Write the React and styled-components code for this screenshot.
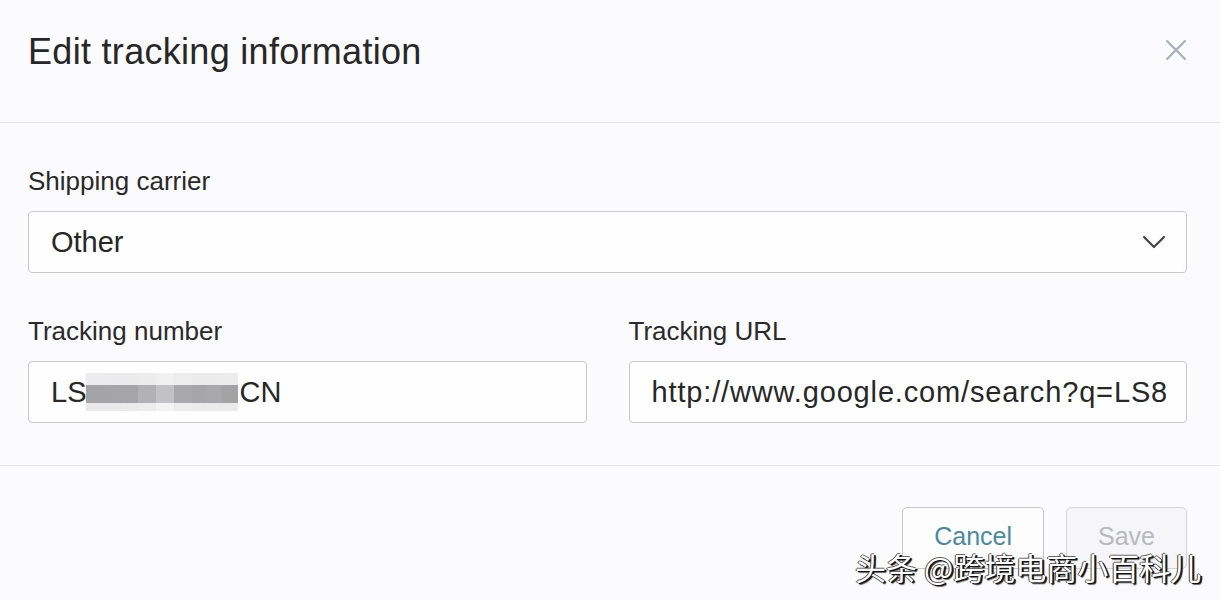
import React from "react";
import styled, { createGlobalStyle } from "styled-components";

const Global = createGlobalStyle`
  html, body { margin: 0; padding: 0; background: #fbfafc; }
  body { font-family: "Liberation Sans", Arial, sans-serif; color: #262626; }
  * { box-sizing: border-box; }
`;

const Page = styled.div`
  position: relative;
  width: 1220px;
  height: 600px;
  overflow: hidden;
  background: #fbfafc;
`;

const Header = styled.header`
  height: 123px;
  border-bottom: 1px solid #e6e5e8;
  display: flex;
  justify-content: space-between;
  align-items: flex-start;
  padding: 31px 32px 0 28px;
`;

const Title = styled.h1`
  margin: 0;
  font-size: 36px;
  font-weight: 400;
  color: #272727;
  letter-spacing: 0.3px;
`;

const CloseBtn = styled.button`
  border: 0;
  background: none;
  padding: 0;
  margin-top: 7px;
  width: 24px;
  height: 24px;
  display: flex;
  align-items: center;
  justify-content: center;
`;

const Body = styled.section`
  padding: 43px 33px 42px 28px;
  border-bottom: 1px solid #e6e5e8;
  display: flex;
  flex-direction: column;
  gap: 43px;
`;

const Field = styled.div`
  display: flex;
  flex-direction: column;
  gap: 15px;
  min-width: 0;
`;

const Row = styled.div`
  display: grid;
  grid-template-columns: 1fr 1fr;
  gap: 42px;
`;

const Label = styled.label`
  font-size: 26px;
  color: #2a2a2a;
  line-height: 30px;
`;

const Box = styled.div`
  height: 62px;
  border: 1px solid #c9c9cc;
  border-radius: 4px;
  background: #fefefe;
  display: flex;
  align-items: center;
  justify-content: space-between;
  padding: 0 20px 0 22px;
  font-size: 29px;
  color: #272727;
  overflow: hidden;
  white-space: nowrap;
`;

const Value = styled.span`
  display: flex;
  align-items: center;
  overflow: hidden;
  min-width: 0;
  letter-spacing: ${(p) => (p.$wide ? "0.85px" : "0")};
`;

const Redacted = styled.span`
  display: inline-grid;
  grid-template-columns: 20px 16px 16px 18px 18px 18px 14px 16px 16px;
  grid-template-rows: 12px 18px 8px;
  width: 152px;
  height: 38px;
  margin: 0 1px 0 0;
  align-self: center;
`;

const Cell = styled.span`
  background: ${(p) => p.$c};
`;

const Footer = styled.footer`
  display: flex;
  justify-content: flex-end;
  gap: 22px;
  padding: 41px 33px 0 28px;
`;

const Button = styled.button`
  height: 62px;
  padding: 14px 31px 0;
  border: 1px solid ${(p) => (p.$disabled ? "#d3d3d6" : "#c6c6ca")};
  border-radius: 5px;
  background: ${(p) => (p.$disabled ? "#f6f6f8" : "#fdfdfe")};
  color: ${(p) => (p.$disabled ? "#b7babd" : "#4a8aa0")};
  font-family: "Liberation Sans", Arial, sans-serif;
  font-size: 25px;
  display: flex;
  align-items: flex-start;
`;

const Watermark = styled.div`
  position: absolute;
  left: 855px;
  top: 547px;
  font-family: "Noto Sans CJK SC", sans-serif;
  font-size: 31px;
  line-height: 40px;
  color: #ffffff;
  white-space: nowrap;
  text-shadow: 1px 1px 0 #111, 2px 1px 0 #222, -1px 0 0 #444, 0 -1px 0 #666, 2px 2px 1px rgba(0,0,0,0.6);
`;

const redactRows = [
  ["#ececee", "#ebebed", "#ebebec", "#ececed", "#f1f1f2", "#ededee", "#ebebec", "#ebebec", "#ececed"],
  ["#a4a3a6", "#a5a4a7", "#a6a5a8", "#b2b1b4", "#c2c2c4", "#a9a8ab", "#a6a5a8", "#a9a8ab", "#a3a2a5"],
  ["#e9e9eb", "#e9e9ea", "#eaeaeb", "#ececed", "#f3f3f4", "#ececed", "#eaeaeb", "#eaeaeb", "#eaeaeb"],
];

const CloseIcon = () => (
  <svg width="22" height="22" viewBox="0 0 22 22">
    <path d="M2 2 L20 20 M20 2 L2 20" stroke="#a3aeb8" strokeWidth="2" strokeLinecap="round" />
  </svg>
);

const Chevron = () => (
  <svg width="24" height="16" viewBox="0 0 24 16">
    <path d="M2 3 L12 13 L22 3" stroke="#444" strokeWidth="2.2" fill="none" strokeLinecap="round" strokeLinejoin="round" />
  </svg>
);

export default function App() {
  return (
    <Page>
      <Global />
      <Header>
        <Title>Edit tracking information</Title>
        <CloseBtn aria-label="Close">
          <CloseIcon />
        </CloseBtn>
      </Header>
      <Body>
        <Field>
          <Label>Shipping carrier</Label>
          <Box>
            <Value>Other</Value>
            <Chevron />
          </Box>
        </Field>
        <Row>
          <Field>
            <Label>Tracking number</Label>
            <Box>
              <Value>
                LS
                <Redacted>
                  {redactRows.flatMap((row, r) =>
                    row.map((c, i) => <Cell key={`${r}-${i}`} $c={c} />)
                  )}
                </Redacted>
                CN
              </Value>
            </Box>
          </Field>
          <Field>
            <Label>Tracking URL</Label>
            <Box>
              <Value $wide>http://www.google.com/search?q=LS8</Value>
            </Box>
          </Field>
        </Row>
      </Body>
      <Footer>
        <Button>Cancel</Button>
        <Button $disabled>Save</Button>
      </Footer>
      <Watermark>头条 @跨境电商小百科儿</Watermark>
    </Page>
  );
}
